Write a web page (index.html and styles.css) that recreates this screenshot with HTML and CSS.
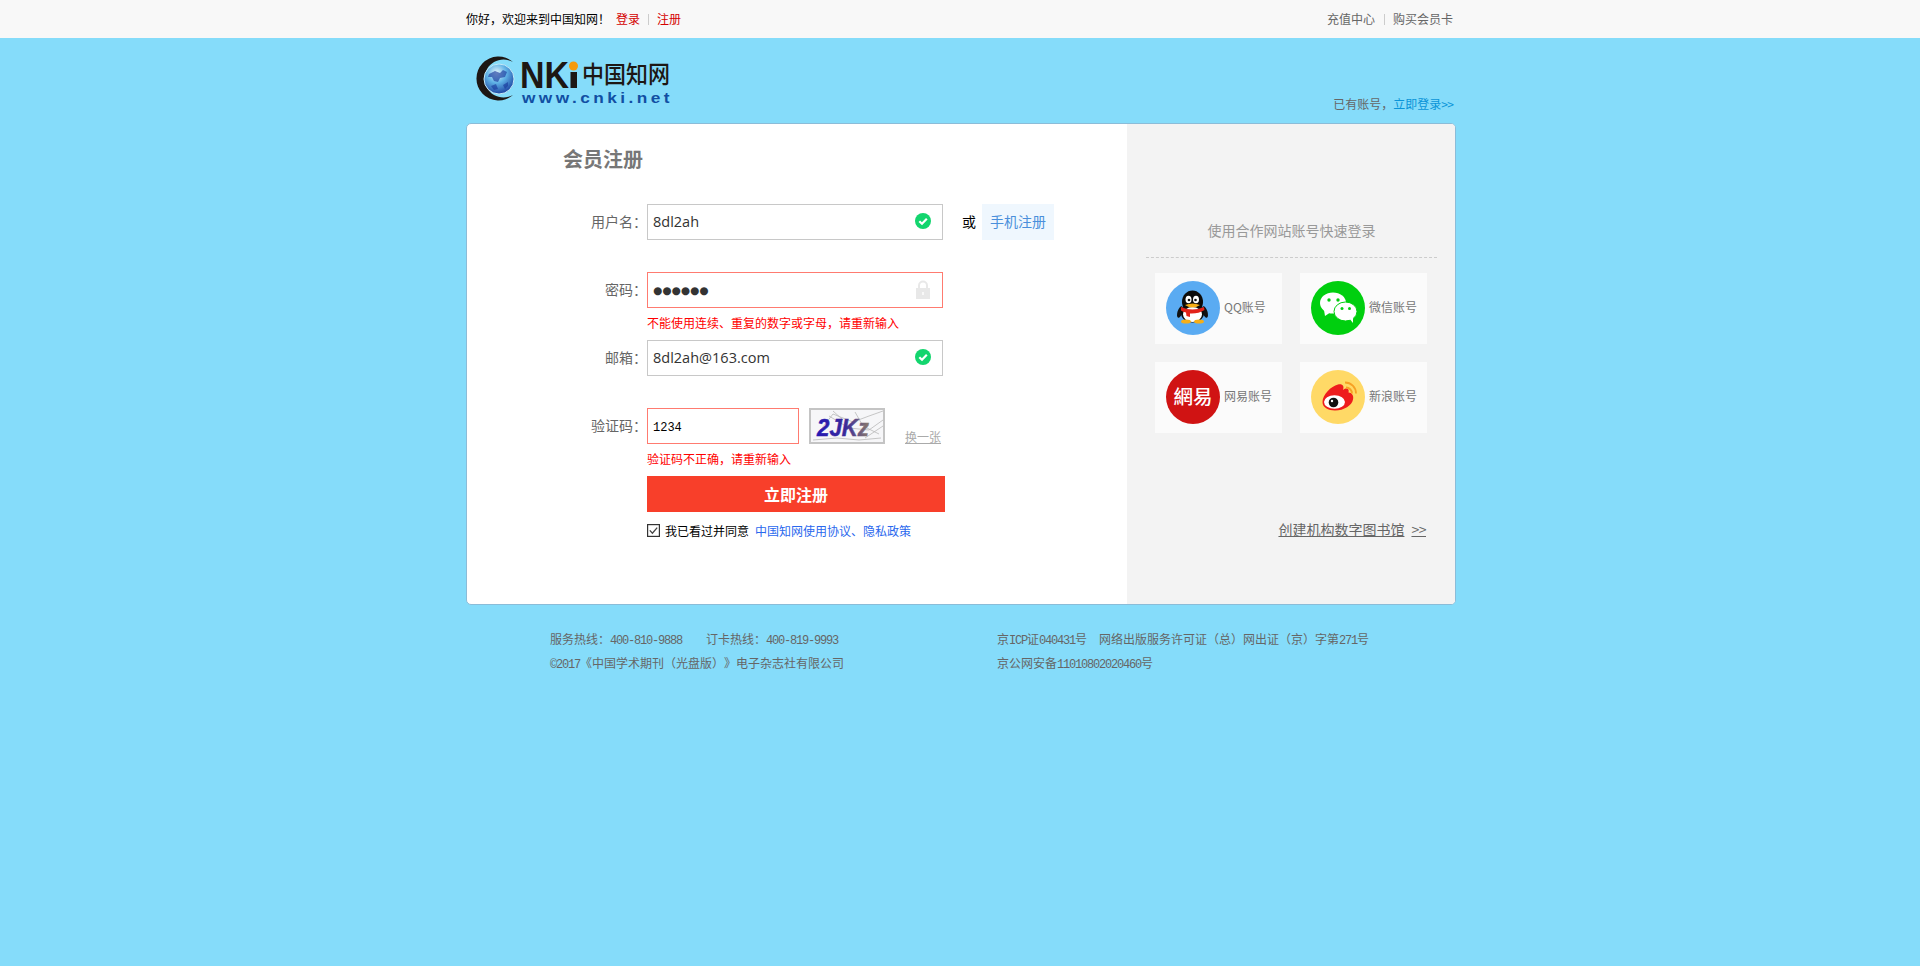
FILE: index.html
```html
<!DOCTYPE html>
<html lang="zh-CN">
<head>
<meta charset="utf-8">
<title>会员注册</title>
<link rel="stylesheet" href="styles.css">
</head>
<body>
<div class="topbar">
  <div class="wrap topbar-inner">
    <div class="top-left">
      <span class="welcome">你好，欢迎来到中国知网！</span>
      <a class="red" href="#">登录</a><i class="sep"></i><a class="red" href="#">注册</a>
    </div>
    <div class="top-right">
      <a href="#">充值中心</a><i class="sep"></i><a href="#">购买会员卡</a>
    </div>
  </div>
</div>

<div class="wrap header">
  <svg class="logo" width="220" height="70" viewBox="0 0 220 70" role="img" aria-label="CNKI 中国知网">
    <defs>
      <radialGradient id="globe" cx="0.42" cy="0.3" r="0.78">
        <stop offset="0" stop-color="#e8f6fc"/>
        <stop offset="0.42" stop-color="#5fb2e6"/>
        <stop offset="1" stop-color="#102f96"/>
      </radialGradient>
    </defs>
    <path class="logo-ink" d="M48 17 A22 22 0 1 0 48 50 A19 19 0 1 1 48 17Z"/>
    <circle cx="34" cy="34" r="15" fill="url(#globe)" stroke="#c4e8f7" stroke-width="1"/>
    <path class="logo-land" d="M24 29 l6 -3 l5 2 l3 -3 l4 2 l-2 5 l-5 1 l-2 4 l-4 -1 l-2 -4 l-4 0Z M26 41 l5 -2 l2 5 l-4 1Z M38 40 l5 -3 l0 4 l-3 3Z"/>
    <text class="logo-nk" x="55" y="43" textLength="49" lengthAdjust="spacingAndGlyphs">NK</text>
    <rect class="logo-ink" x="105.500" y="27" width="6.500" height="16"/>
    <circle cx="108.500" cy="21" r="4.500" fill="#f59a0c"/>
    <text class="logo-cn" x="117" y="38" textLength="88" lengthAdjust="spacingAndGlyphs">中国知网</text>
    <text class="logo-url" x="57" y="58" textLength="151" lengthAdjust="spacingAndGlyphs">www.cnki.net</text>
  </svg>
  <div class="have-account">已有账号，<a href="#">立即登录<span class="gt">&gt;&gt;</span></a></div>
</div>

<div class="wrap card">
  <div class="form-pane">
    <h1 class="title">会员注册</h1>

    <div class="row">
      <div class="label">用户名：</div>
      <div class="controls">
        <div class="field">8dl2ah
          <svg class="field-icon" width="16" height="16" viewBox="0 0 16 16"><circle cx="8" cy="8" r="8" fill="#13d56e"/><path d="M4.300 8.200 L7 10.800 L11.800 5.800" fill="none" stroke="#fff" stroke-width="2.200"/></svg>
        </div>
        <span class="or">或</span>
        <a class="phone" href="#">手机注册</a>
      </div>
    </div>

    <div class="row">
      <div class="label">密码：</div>
      <div class="controls">
        <div class="field error dots">●●●●●●
          <svg class="field-icon lock" width="14" height="19" viewBox="0 0 14 19"><path d="M3 8 V5.500 a4 4 0 0 1 8 0 V8" fill="none" stroke="#e8e8e8" stroke-width="2"/><rect y="8" width="14" height="11" fill="#e8e8e8"/><rect x="6.300" y="12" width="1.400" height="3" fill="#fff"/></svg>
        </div>
      </div>
      <div class="msg">不能使用连续、重复的数字或字母，请重新输入</div>
    </div>

    <div class="row">
      <div class="label">邮箱：</div>
      <div class="controls">
        <div class="field">8dl2ah@163.com
          <svg class="field-icon" width="16" height="16" viewBox="0 0 16 16"><circle cx="8" cy="8" r="8" fill="#13d56e"/><path d="M4.300 8.200 L7 10.800 L11.800 5.800" fill="none" stroke="#fff" stroke-width="2.200"/></svg>
        </div>
      </div>
    </div>

    <div class="row">
      <div class="label">验证码：</div>
      <div class="controls">
        <div class="field error short">1234</div>
        <svg class="captcha" width="76" height="36" viewBox="0 0 76 36" role="img" aria-label="2JKz">
          <defs>
            <linearGradient id="cap" x1="0" x2="1" y1="0" y2="0">
              <stop offset="0" stop-color="#2418b4"/>
              <stop offset="0.55" stop-color="#3a2a9a"/>
              <stop offset="1" stop-color="#8a7b6c"/>
            </linearGradient>
          </defs>
          <rect x="1" y="1" width="74" height="34" fill="#f6f6f8" stroke="#c4c4c4" stroke-width="2"/>
          <path class="noise" d="M10 24 L24 6 L44 14 L60 8 L74 3 M20 8 L40 20 L60 22 L74 12 M46 4 L54 18 L70 26 M4 32 L28 30 L50 32 L72 30 M56 30 L74 18 M24 3 L34 12"/>
          <text class="captcha-text" x="8" y="28" fill="url(#cap)" stroke="url(#cap)" textLength="52" lengthAdjust="spacingAndGlyphs">2JKz</text>
        </svg>
        <a class="refresh" href="#">换一张</a>
      </div>
      <div class="msg">验证码不正确，请重新输入</div>
    </div>

    <button class="submit" type="button">立即注册</button>

    <div class="agree">
      <svg class="check" width="13" height="13" viewBox="0 0 13 13"><rect x="0.600" y="0.600" width="11.800" height="11.800" fill="#fff" stroke="#333" stroke-width="1.200"/><path d="M2.800 6.400 L5.400 9.200 L10.200 3.600" fill="none" stroke="#444" stroke-width="1.300"/></svg>
      <span class="agree-text">我已看过并同意</span>
      <a class="agree-link" href="#">中国知网使用协议、隐私政策</a>
    </div>
  </div>

  <div class="side-pane">
    <div class="side-title">使用合作网站账号快速登录</div>
    <div class="partners">
      <a class="partner" href="#">
        <svg width="54" height="54" viewBox="0 0 54 54">
          <circle cx="27" cy="27" r="27" fill="#5aabf2"/>
          <ellipse cx="14" cy="31" rx="2.500" ry="6" fill="#111" transform="rotate(18 14 31)"/>
          <ellipse cx="39" cy="31" rx="2.500" ry="6" fill="#111" transform="rotate(-18 39 31)"/>
          <ellipse cx="26.500" cy="21" rx="10.500" ry="11.500" fill="#0b0b0b"/>
          <ellipse cx="26.500" cy="32" rx="11.500" ry="9.500" fill="#0b0b0b"/>
          <ellipse cx="26.500" cy="33.500" rx="9.500" ry="7.500" fill="#fff"/>
          <ellipse cx="22.500" cy="18.500" rx="3" ry="3.800" fill="#fff"/>
          <ellipse cx="30" cy="18.500" rx="3" ry="3.800" fill="#fff"/>
          <circle cx="23" cy="19" r="1.300" fill="#111"/>
          <circle cx="29.500" cy="19" r="1.300" fill="#111"/>
          <path d="M19 24 Q26.500 21 34 24 Q26.500 29 19 24Z" fill="#f6ae17"/>
          <path d="M15 26 Q26.500 31 38 26 L38.500 29 Q32 33 24 32.500 L24 36 L20.500 35 L20 31.500 Q17 31 15 29.500Z" fill="#e2231a"/>
          <ellipse cx="20" cy="40.500" rx="5" ry="2" fill="#f6ae17"/>
          <ellipse cx="33" cy="40.500" rx="5" ry="2" fill="#f6ae17"/>
        </svg>
        <span>QQ账号</span>
      </a>
      <a class="partner" href="#">
        <svg width="54" height="54" viewBox="0 0 54 54">
          <circle cx="27" cy="27" r="27" fill="#00cf0f"/>
          <ellipse cx="22" cy="22" rx="13" ry="10.500" fill="#fff"/>
          <path d="M13 29 L14 35 L20 31Z" fill="#fff"/>
          <circle cx="18" cy="19" r="1.700" fill="#00cf0f"/>
          <circle cx="27" cy="19" r="1.700" fill="#00cf0f"/>
          <ellipse cx="34.500" cy="30.500" rx="11.500" ry="9.500" fill="#fff" stroke="#00cf0f" stroke-width="1"/>
          <path d="M38 37 L42 42 L42 36Z" fill="#fff"/>
          <circle cx="31" cy="27.500" r="1.500" fill="#00cf0f"/>
          <circle cx="38.500" cy="27.500" r="1.500" fill="#00cf0f"/>
        </svg>
        <span>微信账号</span>
      </a>
      <a class="partner" href="#">
        <svg width="54" height="54" viewBox="0 0 54 54">
          <circle cx="27" cy="27" r="27" fill="#d01313"/>
          <text class="netease" x="7.500" y="33.500" textLength="39" lengthAdjust="spacingAndGlyphs">網易</text>
        </svg>
        <span>网易账号</span>
      </a>
      <a class="partner" href="#">
        <svg width="54" height="54" viewBox="0 0 54 54">
          <circle cx="27" cy="27" r="27" fill="#ffd966"/>
          <path d="M11.500 32 C11.500 25 20 16 27 14.500 C31.500 13.500 33.500 16 32 20 C36 17 38.500 19 37.500 22.500 C41 22.500 43 26 42 29.500 C41 35.500 33 40.500 24 40.500 C17 40.500 11.500 37.500 11.500 32Z" fill="#ee1c1c"/>
          <ellipse cx="23.500" cy="32" rx="10.500" ry="6.800" fill="#fff"/>
          <circle cx="22.500" cy="32.500" r="4.800" fill="#111"/>
          <circle cx="21" cy="31" r="1.200" fill="#fff"/>
          <path d="M34 12.500 A11 11 0 0 1 45 23.500" fill="none" stroke="#f7a024" stroke-width="1.800"/>
          <path d="M35 17.500 A6 6 0 0 1 41 23.500" fill="none" stroke="#f7a024" stroke-width="1.800"/>
        </svg>
        <span>新浪账号</span>
      </a>
    </div>
    <a class="org-link" href="#">创建机构数字图书馆<span class="org-gt">&gt;&gt;</span></a>
  </div>
</div>

<div class="wrap footer">
  <div class="foot-col">
    <p>服务热线：<span class="latin">400-810-9888</span><span class="foot-gap"></span>订卡热线：<span class="latin">400-819-9993</span></p>
    <p><span class="latin">©2017</span>《中国学术期刊（光盘版）》电子杂志社有限公司</p>
  </div>
  <div class="foot-col">
    <p>京<span class="latin">ICP</span>证<span class="latin">040431</span>号<span class="foot-gap small"></span>网络出版服务许可证（总）网出证（京）字第<span class="latin">271</span>号</p>
    <p>京公网安备<span class="latin">11010802020460</span>号</p>
  </div>
</div>
</body>
</html>
```
FILE: styles.css
```css
* { box-sizing: border-box; }
html, body { margin: 0; padding: 0; }
body {
  min-height: 966px;
  background: #85dcfa;
  font-family: "Noto Sans CJK SC", "Liberation Sans", sans-serif;
  font-size: 12px;
  color: #666;
  text-spacing-trim: space-all;
}
a { color: inherit; text-decoration: none; }
i { font-style: normal; }
p { margin: 0; }
.wrap { width: 990px; margin-left: calc(50% - 494px); }

/* top bar */
.topbar { height: 38px; background: #f8f8f8; }
.topbar-inner {
  display: flex;
  justify-content: space-between;
  align-items: center;
  height: 38px;
  line-height: 16px;
  padding-right: 3px;
}
.top-left, .top-right { display: flex; align-items: center; }
.welcome { color: #000; margin-right: 6px; }
.red { color: #d40000; }
.sep { width: 1px; height: 11px; background: #ccc; margin: 0 8px; }
.top-right .sep { margin: 0 8px 0 9px; }

/* header */
.header {
  display: flex;
  justify-content: space-between;
  height: 85px;
}
.logo { margin: 7px 0 0 -1px; }
.logo-ink { fill: #1d1714; }
.logo-land { fill: #1a3a9c; opacity: 0.65; }
.logo-nk { font: 700 36px "Liberation Sans", sans-serif; fill: #1d1714; }
.logo-cn { font: 500 24px "Noto Sans CJK SC", sans-serif; fill: #1d1714; }
.logo-url { font: 700 15px "Liberation Sans", sans-serif; letter-spacing: 3px; fill: #114fa3; }
.have-account {
  align-self: flex-end;
  line-height: 16px;
  margin: 0 3px 11px 0;
}
.have-account a { color: #0a94d8; }
.gt { letter-spacing: -0.800px; }

/* card */
.card {
  display: flex;
  height: 482px;
  background: #fff;
  border: 1px solid #8bbcd8;
  border-radius: 5px;
  overflow: hidden;
}
.form-pane { width: 660px; padding-left: 80px; }
.title {
  margin: 0 0 0 16px;
  height: 80px;
  padding-top: 15px;
  font-size: 20px;
  line-height: 40px;
  font-weight: 700;
  color: #777;
}
.row {
  display: grid;
  grid-template-columns: 100px 1fr;
  grid-template-rows: 36px 32px;
}
.label {
  text-align: right;
  font-size: 14px;
  line-height: 34px;
  color: #666;
}
.controls { display: flex; align-items: center; }
.field {
  position: relative;
  width: 296px;
  height: 36px;
  padding-left: 5px;
  border: 1px solid #c8c8c8;
  font: 14.500px/34px "Open Sans", sans-serif;
  color: #333;
}
.field.error { border-color: #ff7b70; }
.field.short {
  width: 152px;
  padding-top: 2px;
  font: 12px/34px "Liberation Mono", monospace;
  color: #000;
}
.field.dots { font: 10.500px/34px "DejaVu Sans", sans-serif; letter-spacing: 0.100px; }
.field-icon { position: absolute; right: 11px; top: 8px; }
.field-icon.lock { right: 12px; top: 7px; }
.or { margin-left: 19px; font-size: 14px; line-height: 34px; height: 36px; color: #000; }
.phone {
  width: 72px;
  height: 36px;
  margin-left: 6px;
  background: #eff7fe;
  color: #4a8fdb;
  font-size: 14px;
  line-height: 34px;
  text-align: center;
}
.captcha { margin-left: 10px; }
.refresh {
  align-self: flex-end;
  margin: 0 0 -1px 20px;
  line-height: 16px;
  color: #aaa;
  text-decoration: underline;
}
.noise { fill: none; stroke: #b9b9b9; stroke-width: 0.800; }
.captcha-text { font: italic 700 24px "Liberation Sans", sans-serif; stroke-width: 0.500; }
.msg {
  grid-column: 2;
  grid-row: 2;
  color: #f00;
  line-height: 30px;
}
.submit {
  display: block;
  width: 298px;
  height: 36px;
  margin: 0 0 0 100px;
  padding: 0;
  border: 0;
  background: #f83f2a;
  color: #fff;
  font: 700 16px "Noto Sans CJK SC", sans-serif;
}
.agree {
  display: flex;
  align-items: center;
  height: 16px;
  margin: 10px 0 0 100px;
}
.check { flex: none; margin-top: 1px; }
.agree-text { margin-left: 5px; color: #000; }
.agree-link { margin-left: 6px; color: #2a68ee; }

/* side pane */
.side-pane {
  flex: 1;
  display: flex;
  flex-direction: column;
  padding-top: 96px;
  background: #f3f3f3;
}
.side-title {
  margin: 0 18px 0 19px;
  padding-bottom: 17px;
  border-bottom: 1px dashed #ccc;
  font-size: 14px;
  line-height: 20px;
  text-align: center;
  color: #999;
}
.partners {
  display: grid;
  grid-template-columns: 127px 127px;
  grid-auto-rows: 71px;
  gap: 18px;
  margin: 15px 0 0 28px;
}
.partner {
  display: flex;
  align-items: flex-start;
  gap: 4px;
  padding: 8px 0 0 11px;
  background: #fbfbfb;
  color: #777;
}
.partner span { line-height: 54px; height: 54px; margin-top: -1px; }
.netease { font: 500 19px "Noto Sans CJK TC", sans-serif; fill: #fff; }
.org-link {
  align-self: flex-end;
  margin: 86px 29px 0 0;
  font-size: 14px;
  line-height: 20px;
  color: #666;
  text-decoration: underline;
}
.org-gt { margin-left: 7px; letter-spacing: -0.500px; }

/* footer */
.footer {
  display: flex;
  padding: 22px 0 0 84px;
  line-height: 24px;
  color: #666;
}
.foot-col { width: 447px; white-space: nowrap; }
.latin { font: 12px "Liberation Mono", monospace; letter-spacing: -1.200px; }
.foot-gap { display: inline-block; width: 24px; }
.foot-gap.small { width: 12px; }
```
